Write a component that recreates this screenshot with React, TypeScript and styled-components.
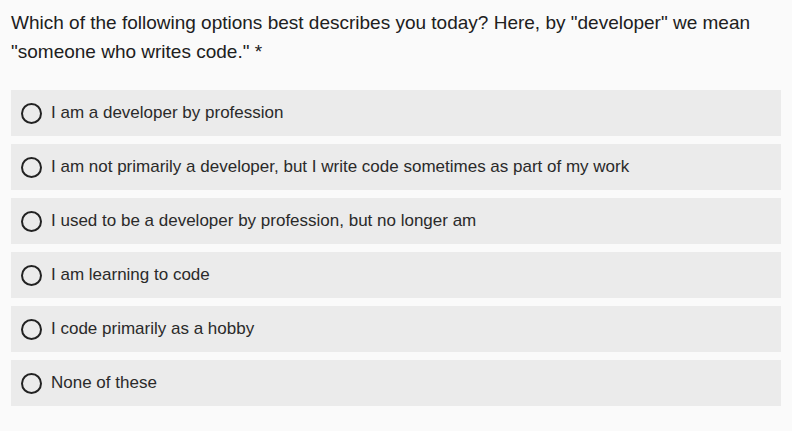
import React from "react";
import styled, { createGlobalStyle } from "styled-components";

const Global = createGlobalStyle`
  html, body { margin: 0; padding: 0; background: #fafafa; }
  body { font-family: "Liberation Sans", Arial, sans-serif; }
`;

const Page = styled.div`
  padding: 8px 11px 0 11px;
  width: 770px;
`;

const Question = styled.div`
  font-size: 19px;
  line-height: 29px;
  color: #202020;
  margin-bottom: 24px;
`;

const Options = styled.div`
  display: flex;
  flex-direction: column;
  gap: 8px;
`;

const Option = styled.label`
  display: flex;
  align-items: center;
  height: 46px;
  background: #ebebeb;
  padding-left: 10px;
  gap: 9px;
  font-size: 17px;
  color: #2a2a2a;
  cursor: pointer;
`;

const Radio = styled.span`
  width: 17px;
  height: 17px;
  border: 2px solid #222;
  border-radius: 50%;
  box-sizing: content-box;
  flex: none;
`;

const options = [
  "I am a developer by profession",
  "I am not primarily a developer, but I write code sometimes as part of my work",
  "I used to be a developer by profession, but no longer am",
  "I am learning to code",
  "I code primarily as a hobby",
  "None of these",
];

export default function App() {
  return (
    <>
      <Global />
      <Page>
        <Question>
          Which of the following options best describes you today? Here, by "developer" we mean "someone who writes code." *
        </Question>
        <Options>
          {options.map((o) => (
            <Option key={o}>
              <Radio />
              {o}
            </Option>
          ))}
        </Options>
      </Page>
    </>
  );
}
